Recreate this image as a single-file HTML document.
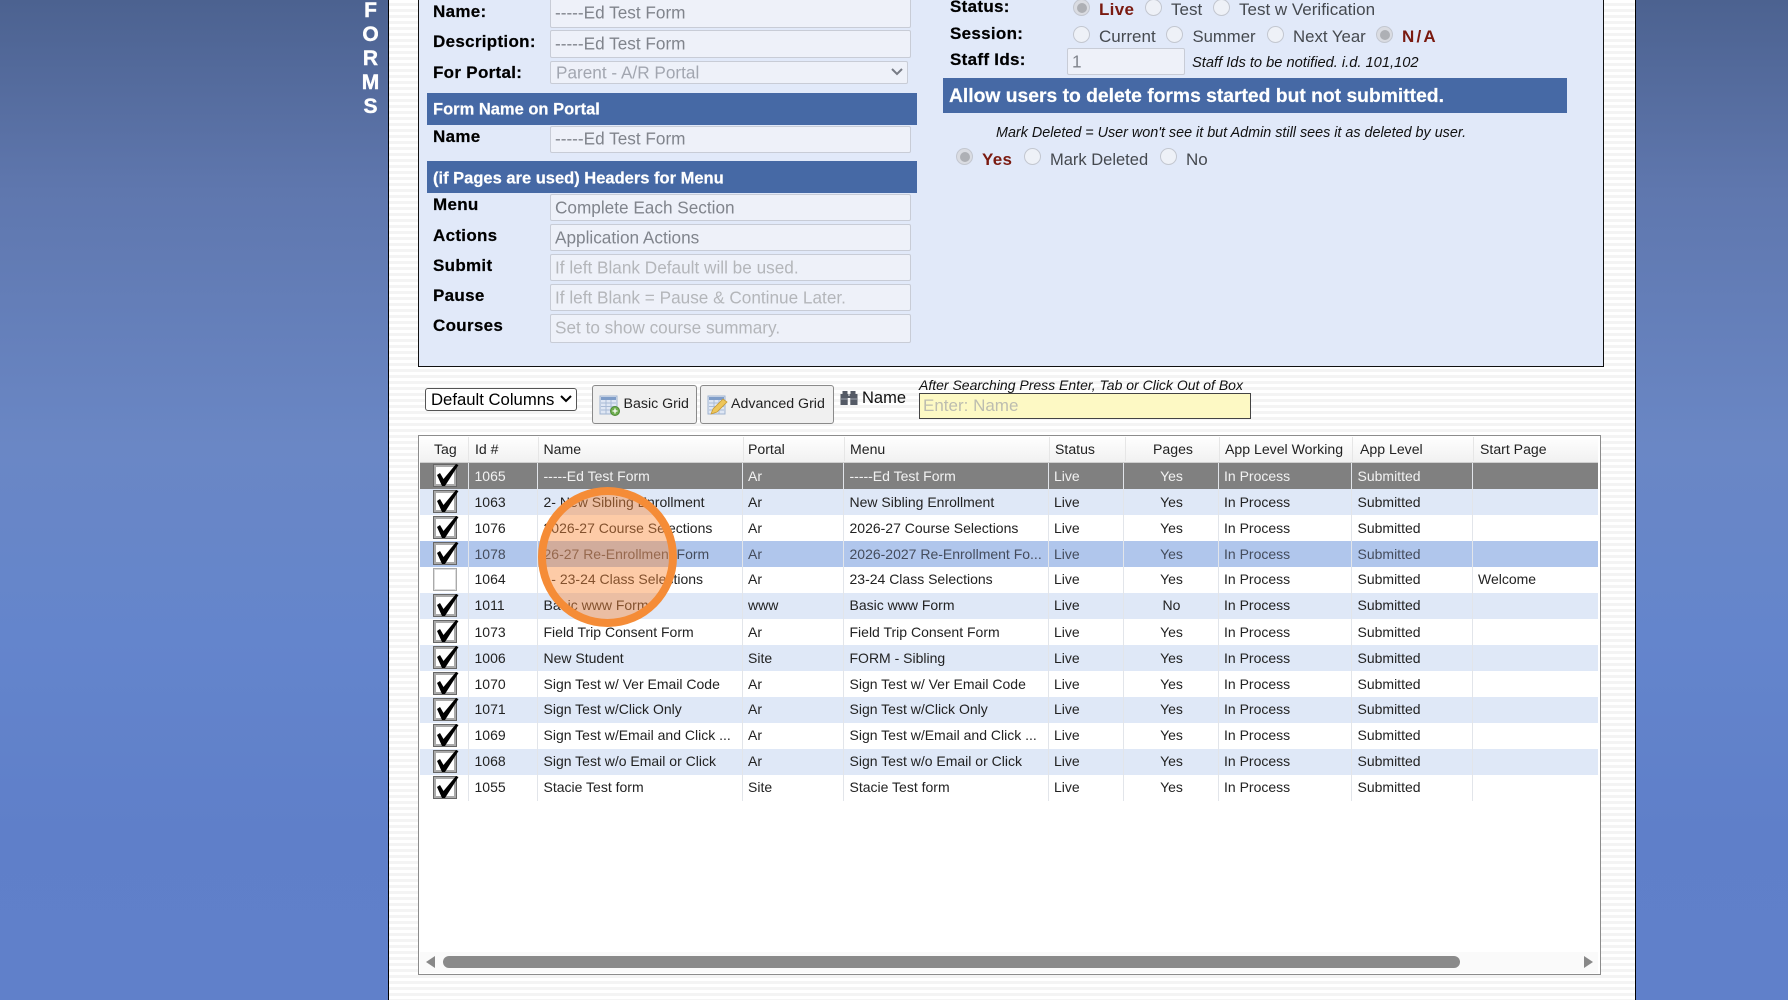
<!DOCTYPE html>
<html>
<head>
<meta charset="utf-8">
<title>Forms</title>
<style>
html,body{margin:0;padding:0;width:1788px;height:1000px;overflow:hidden}
body{position:relative;font-family:"Liberation Sans",Arial,sans-serif;background:linear-gradient(180deg,#4c6290 0,#5f77ae 191px,#6a87c5 446px,#6485cc 638px,#5f7fc9 830px,#6080ca 1000px)}
div,svg{position:absolute}
.main{left:388px;top:0;width:1245.500px;height:1000px;border-left:1.5px solid #000;border-right:1.5px solid #000;background:repeating-linear-gradient(180deg,#fff 0,#fff 3px,#f4f4f4 3px,#f4f4f4 6px)}
.panel{left:418px;top:-10px;width:1183.500px;height:374.500px;border:1.5px solid #111;background:#e1e9f9}
.t{white-space:nowrap;height:20px;line-height:20px}
.f{left:360px;width:21px;text-align:center;color:#fff;font-weight:bold;font-size:21px;height:24px;line-height:24px;-webkit-text-stroke:.4px #fff}
.l{left:433px;font-weight:bold;font-size:17px;letter-spacing:.3px;color:#000;-webkit-text-stroke:.2px #000}
.r{left:950px;font-weight:bold;font-size:17px;letter-spacing:.3px;color:#000;-webkit-text-stroke:.2px #000}
.in{left:550px;width:359px;background:#eef1f9;border:1px solid #c8ccd6;border-radius:2px;box-sizing:content-box;overflow:hidden}
.in span{position:absolute;left:4px;top:50%;transform:translateY(-50%);font-size:17.2px;color:#80848c;white-space:nowrap}
.in span.p{color:#b4b6ba}
.bar{background:#4669a5;color:#fff;font-weight:bold;-webkit-text-stroke:.2px #fff}
.bar span{position:absolute;left:6px;top:50%;transform:translateY(-50%);white-space:nowrap}
.rd{width:15px;height:15px;border-radius:50%;background:#eef1f7;border:1px solid #c3c7d0}
.rd.on{background:#dadce2}
.rd.on::after{content:"";position:absolute;left:2.5px;top:2.5px;width:10px;height:10px;border-radius:50%;background:#aeb0b5}
.v{font-size:17px;color:#45494f}
.red{font-size:17px;color:#7a1a10;font-weight:bold;letter-spacing:.3px}
.it{font-style:italic;font-size:14px;color:#111}
.btn{background:#f0f0f0;border:1px solid #8a8a8a;border-radius:3px;box-sizing:border-box;top:385px;height:39px}
.tbl{left:418px;top:435px;width:1181px;height:538px;background:#fff;border:1.5px solid #8c8c8c}
.hd{left:420px;top:436px;width:1178px;height:26px;background:linear-gradient(180deg,#fff,#f1f1f1);border-bottom:1px solid #cfcfcf}
.h{top:439px;height:20px;line-height:20px;font-size:14.1px;color:#222;white-space:nowrap}
.row{left:420px;width:1178px;height:26px}
.a{background:#dfe8f7}.w{background:#fff}.g{background:#808080}.s{background:#b0c6ec}
.row div{top:2px;height:20px;line-height:20px;font-size:14px;color:#222;white-space:nowrap}
.row.d div{top:3px}
.g div{color:#f2f2f2}.s div{color:#444c5c}
.c2{left:54.5px}.c3{left:123.5px}.c4{left:328px}.c5{left:429.5px}.c6{left:634px}
.c7{left:703px;width:97px;text-align:center}.c8{left:804px}.c9{left:937.5px}.c10{left:1058px}
.sep{top:463px;height:338px;width:1px;background:#e2e5ea}
.hs{top:437px;height:24px;width:1px;background:#e6e6e6}
.cb{left:13px;top:1px;width:24px;height:23px;background:#fff;border:1px solid #666;box-shadow:inset 0 0 0 2px #aaa;box-sizing:border-box}
.cb svg{left:0;top:0;overflow:visible}
</style>
</head>
<body>
<div class="f" style="top:-1px">F</div>
<div class="f" style="top:23px">O</div>
<div class="f" style="top:47px">R</div>
<div class="f" style="top:71px">M</div>
<div class="f" style="top:95px">S</div>

<div class="main"></div>
<div class="panel"></div>

<!-- left form -->
<div class="t l" style="top:2px">Name:</div>
<div class="t l" style="top:32px">Description:</div>
<div class="t l" style="top:63px">For Portal:</div>
<div class="in" style="top:-3px;height:29px"><span>-----Ed Test Form</span></div>
<div class="in" style="top:30px;height:26px"><span>-----Ed Test Form</span></div>
<div class="in" style="top:61px;height:21px;width:356px"><span style="left:5px;color:#a2a6b0">Parent - A/R Portal</span></div>
<svg style="left:890px;top:67px" width="14" height="10" viewBox="0 0 14 10"><path d="M2 2 L7 7 L12 2" fill="none" stroke="#777b85" stroke-width="2"/></svg>

<div class="bar" style="left:427px;top:93px;width:490px;height:32px;font-size:16.5px"><span style="margin-top:1px">Form Name on Portal</span></div>
<div class="t l" style="top:127px">Name</div>
<div class="in" style="top:126px;height:25px"><span style="margin-top:-1px">-----Ed Test Form</span></div>

<div class="bar" style="left:427px;top:161px;width:490px;height:32px;font-size:16.5px"><span style="margin-top:2px">(if Pages are used) Headers for Menu</span></div>
<div class="t l" style="top:195px">Menu</div>
<div class="t l" style="top:226px">Actions</div>
<div class="t l" style="top:256px">Submit</div>
<div class="t l" style="top:286px">Pause</div>
<div class="t l" style="top:316px">Courses</div>
<div class="in" style="top:194px;height:25px"><span>Complete Each Section</span></div>
<div class="in" style="top:224px;height:25px"><span>Application Actions</span></div>
<div class="in" style="top:254px;height:25px"><span class="p">If left Blank Default will be used.</span></div>
<div class="in" style="top:284px;height:25px"><span class="p">If left Blank = Pause &amp; Continue Later.</span></div>
<div class="in" style="top:314px;height:27px"><span class="p" style="margin-top:-1px">Set to show course summary.</span></div>

<!-- right form -->
<div class="t r" style="top:-3px">Status:</div>
<div class="t r" style="top:24px">Session:</div>
<div class="t r" style="top:50px">Staff Ids:</div>

<div class="rd on" style="left:1073px;top:-1px"></div>
<div class="t red" style="left:1099px;top:0px">Live</div>
<div class="rd" style="left:1145px;top:-1px"></div>
<div class="t v" style="left:1171px;top:0px">Test</div>
<div class="rd" style="left:1213px;top:-1px"></div>
<div class="t v" style="left:1239px;top:0px">Test w Verification</div>

<div class="rd" style="left:1073px;top:26px"></div>
<div class="t v" style="left:1099px;top:27px">Current</div>
<div class="rd" style="left:1166px;top:26px"></div>
<div class="t v" style="left:1192.500px;top:27px;font-size:16.7px">Summer</div>
<div class="rd" style="left:1267px;top:26px"></div>
<div class="t v" style="left:1293px;top:27px;font-size:16.8px">Next Year</div>
<div class="rd on" style="left:1376px;top:26px"></div>
<div class="t red" style="left:1402px;top:27px;letter-spacing:2.2px">N/A</div>

<div class="in" style="left:1067px;top:48px;width:116px;height:25px"><span style="left:4px">1</span></div>
<div class="t it" style="left:1192px;top:53px;font-size:14.66px">Staff Ids to be notified. i.d. 101,102</div>

<div class="bar" style="left:943px;top:78px;width:624px;height:35px;font-size:19.3px"><span style="margin-top:1px">Allow users to delete forms started but not submitted.</span></div>

<div class="t it" style="left:996px;top:123px;font-size:14.35px">Mark Deleted = User won't see it but Admin still sees it as deleted by user.</div>

<div class="rd on" style="left:956px;top:148px"></div>
<div class="t red" style="left:982px;top:150px">Yes</div>
<div class="rd" style="left:1024px;top:148px"></div>
<div class="t v" style="left:1050px;top:150px;font-size:16.5px">Mark Deleted</div>
<div class="rd" style="left:1160px;top:148px"></div>
<div class="t v" style="left:1186px;top:150px">No</div>

<!-- toolbar -->
<div style="left:425px;top:388px;width:152px;height:23px;box-sizing:border-box;background:#fff;border:1px solid #555;border-radius:3px"></div>
<div class="t" style="left:431px;top:390px;font-size:16.7px;color:#000">Default Columns</div>
<svg style="left:559px;top:394px" width="14" height="10" viewBox="0 0 14 10"><path d="M2 2 L7 7 L12 2" fill="none" stroke="#000" stroke-width="2"/></svg>

<div class="btn" style="left:592px;width:105px"></div>
<svg style="left:599px;top:395px" width="22" height="21" viewBox="0 0 22 21">
<rect x="1" y="1" width="17" height="18" fill="#dfe7f4" stroke="#9fb3d0"/>
<rect x="2" y="2" width="15" height="3" fill="#7f9dc8"/>
<path d="M2 8H17M2 11.500H17M2 15H17M7 5V19M12 5V19" stroke="#a9bbd6"/>
<circle cx="16" cy="16" r="4.500" fill="#6fae4e" stroke="#4e8a37"/>
<path d="M16 13.500V18.500M13.500 16H18.500" stroke="#fff" stroke-width="1.300"/>
</svg>
<div class="t" style="left:623.500px;top:394px;font-size:14.2px;color:#222">Basic Grid</div>

<div class="btn" style="left:700px;width:134px"></div>
<svg style="left:707px;top:395px" width="22" height="21" viewBox="0 0 22 21">
<rect x="1" y="1" width="17" height="18" fill="#dfe7f4" stroke="#9fb3d0"/>
<rect x="2" y="2" width="15" height="3" fill="#7f9dc8"/>
<path d="M2 8H17M2 11.500H17M2 15H17M7 5V19M12 5V19" stroke="#a9bbd6"/>
<path d="M4 19 L6 14 L16 4 L20 7 L10 17 Z" fill="#eec65a" stroke="#c79a35" stroke-width=".8"/>
</svg>
<div class="t" style="left:731px;top:394px;font-size:14.2px;color:#222">Advanced Grid</div>

<svg style="left:840px;top:390px" width="18" height="16" viewBox="0 0 18 16">
<path d="M2.500 1H7.500V4H8.500V6H9.500V4H10.500V1H15.500V4H17.500V15H10.300V8H7.700V15H.5V4H2.500Z" fill="#555b66"/>
<path d="M1 9H7.500M10.500 9H17" stroke="#a0a6b0"/>
</svg>
<div class="t" style="left:862px;top:388px;font-size:16.5px;color:#111">Name</div>
<div class="t it" style="left:919px;top:375px">After Searching Press Enter, Tab or Click Out of Box</div>
<div style="left:919px;top:393px;width:332px;height:26px;box-sizing:border-box;background:#fdf9c4;border:1.5px solid #444"></div>
<div class="t" style="left:923px;top:396px;font-size:17px;color:#bdbdb0">Enter: Name</div>

<!-- table -->
<div class="tbl"></div>
<div class="hd"></div>
<div class="h" style="left:434px">Tag</div>
<div class="h" style="left:475px">Id #</div>
<div class="h" style="left:543.500px">Name</div>
<div class="h" style="left:748px">Portal</div>
<div class="h" style="left:850px">Menu</div>
<div class="h" style="left:1055px">Status</div>
<div class="h" style="left:1125px;width:96px;text-align:center">Pages</div>
<div class="h" style="left:1225px">App Level Working</div>
<div class="h" style="left:1360px">App Level</div>
<div class="h" style="left:1480px">Start Page</div>
<div class="hs" style="left:468px"></div><div class="hs" style="left:538px"></div><div class="hs" style="left:743px"></div><div class="hs" style="left:844px"></div><div class="hs" style="left:1049px"></div><div class="hs" style="left:1125px"></div><div class="hs" style="left:1219px"></div><div class="hs" style="left:1352px"></div><div class="hs" style="left:1473px"></div>

<div class="row g d" style="top:463px"><div class="c2">1065</div><div class="c3">-----Ed Test Form</div><div class="c4">Ar</div><div class="c5">-----Ed Test Form</div><div class="c6">Live</div><div class="c7">Yes</div><div class="c8">In Process</div><div class="c9">Submitted</div></div>
<div class="row a d" style="top:489px"><div class="c2">1063</div><div class="c3">2- New Sibling Enrollment</div><div class="c4">Ar</div><div class="c5">New Sibling Enrollment</div><div class="c6">Live</div><div class="c7">Yes</div><div class="c8">In Process</div><div class="c9">Submitted</div></div>
<div class="row w d" style="top:515px"><div class="c2">1076</div><div class="c3">2026-27 Course Selections</div><div class="c4">Ar</div><div class="c5">2026-27 Course Selections</div><div class="c6">Live</div><div class="c7">Yes</div><div class="c8">In Process</div><div class="c9">Submitted</div></div>
<div class="row s d" style="top:541px"><div class="c2">1078</div><div class="c3">26-27 Re-Enrollment Form</div><div class="c4">Ar</div><div class="c5">2026-2027 Re-Enrollment Fo...</div><div class="c6">Live</div><div class="c7">Yes</div><div class="c8">In Process</div><div class="c9">Submitted</div></div>
<div class="row w" style="top:567px"><div class="c2">1064</div><div class="c3">1- 23-24 Class Selections</div><div class="c4">Ar</div><div class="c5">23-24 Class Selections</div><div class="c6">Live</div><div class="c7">Yes</div><div class="c8">In Process</div><div class="c9">Submitted</div><div class="c10">Welcome</div></div>
<div class="row a" style="top:593px"><div class="c2">1011</div><div class="c3">Basic www Form</div><div class="c4">www</div><div class="c5">Basic www Form</div><div class="c6">Live</div><div class="c7">No</div><div class="c8">In Process</div><div class="c9">Submitted</div></div>
<div class="row w d" style="top:619px"><div class="c2">1073</div><div class="c3">Field Trip Consent Form</div><div class="c4">Ar</div><div class="c5">Field Trip Consent Form</div><div class="c6">Live</div><div class="c7">Yes</div><div class="c8">In Process</div><div class="c9">Submitted</div></div>
<div class="row a d" style="top:645px"><div class="c2">1006</div><div class="c3">New Student</div><div class="c4">Site</div><div class="c5">FORM - Sibling</div><div class="c6">Live</div><div class="c7">Yes</div><div class="c8">In Process</div><div class="c9">Submitted</div></div>
<div class="row w d" style="top:671px"><div class="c2">1070</div><div class="c3">Sign Test w/ Ver Email Code</div><div class="c4">Ar</div><div class="c5">Sign Test w/ Ver Email Code</div><div class="c6">Live</div><div class="c7">Yes</div><div class="c8">In Process</div><div class="c9">Submitted</div></div>
<div class="row a" style="top:697px"><div class="c2">1071</div><div class="c3">Sign Test w/Click Only</div><div class="c4">Ar</div><div class="c5">Sign Test w/Click Only</div><div class="c6">Live</div><div class="c7">Yes</div><div class="c8">In Process</div><div class="c9">Submitted</div></div>
<div class="row w" style="top:723px"><div class="c2">1069</div><div class="c3">Sign Test w/Email and Click ...</div><div class="c4">Ar</div><div class="c5">Sign Test w/Email and Click ...</div><div class="c6">Live</div><div class="c7">Yes</div><div class="c8">In Process</div><div class="c9">Submitted</div></div>
<div class="row a" style="top:749px"><div class="c2">1068</div><div class="c3">Sign Test w/o Email or Click</div><div class="c4">Ar</div><div class="c5">Sign Test w/o Email or Click</div><div class="c6">Live</div><div class="c7">Yes</div><div class="c8">In Process</div><div class="c9">Submitted</div></div>
<div class="row w" style="top:775px"><div class="c2">1055</div><div class="c3">Stacie Test form</div><div class="c4">Site</div><div class="c5">Stacie Test form</div><div class="c6">Live</div><div class="c7">Yes</div><div class="c8">In Process</div><div class="c9">Submitted</div></div>

<div class="sep" style="left:468px"></div><div class="sep" style="left:537px"></div><div class="sep" style="left:742px"></div><div class="sep" style="left:843px"></div><div class="sep" style="left:1048px"></div><div class="sep" style="left:1123px"></div><div class="sep" style="left:1218px"></div><div class="sep" style="left:1351px"></div><div class="sep" style="left:1472px"></div>

<!-- checkboxes -->
<svg width="0" height="0" style="left:0;top:0"><defs><path id="ck" d="M3 10 L6 8 L9.500 14 L22 -1 L24.500 0 L11 21 L8 21 Z" fill="#000"/></defs></svg>
<div class="cb" style="left:432.500px;top:464px"><svg width="24" height="23"><use href="#ck"/></svg></div>
<div class="cb" style="left:432.500px;top:490px"><svg width="24" height="23"><use href="#ck"/></svg></div>
<div class="cb" style="left:432.500px;top:516px"><svg width="24" height="23"><use href="#ck"/></svg></div>
<div class="cb" style="left:432.500px;top:542px"><svg width="24" height="23"><use href="#ck"/></svg></div>
<div class="cb" style="left:432.500px;top:568px;border-color:#aaa;box-shadow:inset 0 0 0 1px #ddd"></div>
<div class="cb" style="left:432.500px;top:594px"><svg width="24" height="23"><use href="#ck"/></svg></div>
<div class="cb" style="left:432.500px;top:620px"><svg width="24" height="23"><use href="#ck"/></svg></div>
<div class="cb" style="left:432.500px;top:646px"><svg width="24" height="23"><use href="#ck"/></svg></div>
<div class="cb" style="left:432.500px;top:672px"><svg width="24" height="23"><use href="#ck"/></svg></div>
<div class="cb" style="left:432.500px;top:698px"><svg width="24" height="23"><use href="#ck"/></svg></div>
<div class="cb" style="left:432.500px;top:724px"><svg width="24" height="23"><use href="#ck"/></svg></div>
<div class="cb" style="left:432.500px;top:750px"><svg width="24" height="23"><use href="#ck"/></svg></div>
<div class="cb" style="left:432.500px;top:776px"><svg width="24" height="23"><use href="#ck"/></svg></div>

<!-- scrollbar -->
<div style="left:420px;top:952px;width:1178px;height:21px;background:#fafafa"></div>
<svg style="left:424px;top:955px" width="14" height="14" viewBox="0 0 14 14"><path d="M11 1V13L2 7Z" fill="#888"/></svg>
<svg style="left:1581px;top:955px" width="14" height="14" viewBox="0 0 14 14"><path d="M3 1V13L12 7Z" fill="#888"/></svg>
<div style="left:443px;top:956px;width:1017px;height:12px;border-radius:6px;background:#8a8a8a"></div>

<!-- orange highlight -->
<div style="left:538px;top:487px;width:139px;height:140px;box-sizing:border-box;border-radius:50%;border:8px solid #f58c37;background:rgba(250,140,60,.45)"></div>
</body>
</html>
